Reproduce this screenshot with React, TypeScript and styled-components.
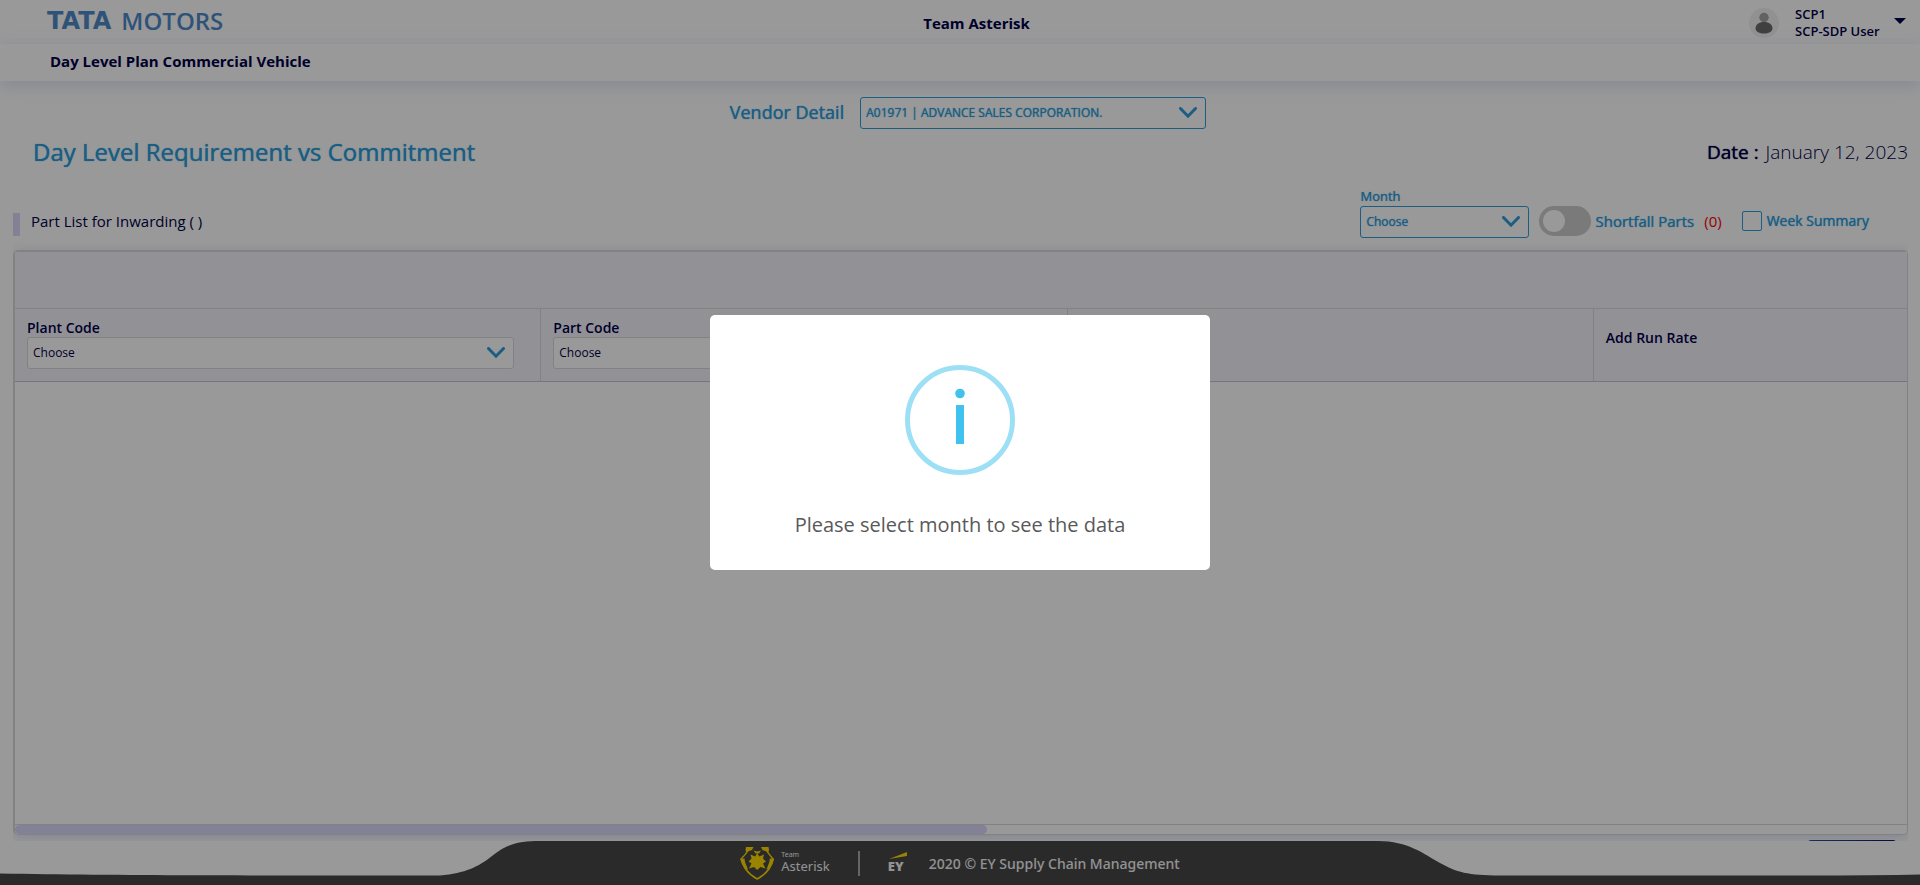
import React from "react";
import styled, { createGlobalStyle } from "styled-components";

const navy = "#000048";
const blue = "#2d9cdb";
const lavender = "#dad7fa";
const line = "#d9d9d9";

const GlobalStyle = createGlobalStyle`
  *, *::before, *::after { box-sizing: border-box; }
  body {
    margin: 0;
    background: #fff;
    color: ${navy};
    font-family: "Open Sans", "Noto Sans", sans-serif;
    font-size: 14px;
  }
  h1, h2, h3, p { margin: 0; }
  select, input, button { font-family: inherit; }
`;

const Page = styled.div`
  min-height: 100vh;
  display: flex;
  flex-direction: column;
  overflow: hidden;
`;

const TopBar = styled.header`
  height: 44px;
  padding: 2px 14px 0 47px;
  display: grid;
  grid-template-columns: 1fr auto 1fr;
  align-items: center;
`;

const Brand = styled.a`
  display: flex;
  align-items: center;
  gap: 10px;
  height: 40px;
  padding-bottom: 4px;
  color: #4f8ac9;
  line-height: 36px;
  text-decoration: none;
`;

const BrandHeavy = styled.span`
  font-family: "DejaVu Sans", sans-serif;
  font-size: 24px;
  font-weight: 700;
`;

const BrandLight = styled.span`
  font-size: 24px;
  font-weight: 600;
`;

const TeamName = styled.h2`
  font-size: 15px;
  line-height: 20px;
  font-weight: 700;
`;

const UserMenu = styled.button`
  justify-self: end;
  display: flex;
  align-items: center;
  padding: 0;
  border: 0;
  background: none;
  color: ${navy};
  text-align: left;
  font-size: 13px;
  line-height: 17px;
  font-weight: 600;
`;

const UserName = styled.span`
  width: 99px;
  margin-left: 16px;
`;

const TitleBar = styled.div`
  height: 37px;
  padding: 0 50px 4px;
  display: flex;
  align-items: center;
  background: #fff;
  box-shadow: 0 4px 16px rgba(160, 165, 225, 0.35);
`;

const PageTitle = styled.h1`
  font-size: 15px;
  line-height: 20px;
  font-weight: 700;
`;

const Main = styled.main`
  flex: 1;
  padding: 16px 12px 0;
  display: flex;
  flex-direction: column;
`;

const VendorRow = styled.div`
  display: flex;
  justify-content: center;
  align-items: center;
  gap: 16px;
  padding-left: 16px;
`;

const VendorLabel = styled.label`
  padding-bottom: 2px;
  color: ${blue};
  font-size: 18px;
  line-height: 24px;
  text-shadow: 0 0 1px ${blue};
`;

const SelectBox = styled.span<{ $width?: string }>`
  position: relative;
  display: block;
  width: ${(p) => p.$width ?? "100%"};
`;

const SelectField = styled.select<{ $accent?: boolean }>`
  appearance: none;
  display: block;
  width: 100%;
  height: 32px;
  padding: 0 36px 2px 5px;
  border: 1px solid ${(p) => (p.$accent ? blue : line)};
  border-radius: 3px;
  background: #fff;
  color: ${(p) => (p.$accent ? blue : navy)};
  font-size: 12px;
  text-shadow: ${(p) => (p.$accent ? `0 0 1px ${blue}` : "none")};
`;

const SelectArrow = styled.svg`
  position: absolute;
  right: 9px;
  top: 10px;
  pointer-events: none;
`;

const HeadingRow = styled.div`
  height: 47px;
  padding: 0 0 1px 21px;
  display: flex;
  justify-content: space-between;
  align-items: center;
`;

const Heading = styled.h2`
  color: ${blue};
  font-size: 24px;
  line-height: 32px;
  font-weight: 400;
  text-shadow: 0 0 1px ${blue};
`;

const DateText = styled.p`
  font-size: 19px;
  line-height: 24px;
  font-weight: 300;
`;

const DateLabel = styled.span`
  margin-right: 2px;
  font-weight: 400;
  text-shadow: 0 0 1px ${navy};
`;

const FilterRow = styled.div`
  padding: 10px 39px 12px 0;
  display: flex;
  justify-content: space-between;
  align-items: flex-end;
`;

const ListTitle = styled.h3`
  display: flex;
  gap: 11px;
  margin-bottom: 2px;
  font-size: 15px;
  line-height: 16px;
  font-weight: 400;

  &::before {
    content: "";
    width: 7px;
    height: 23px;
    margin-left: 1px;
    background: ${lavender};
  }
`;

const Filters = styled.div`
  display: flex;
  align-items: flex-end;
`;

const MonthLabel = styled.label`
  display: block;
  color: ${blue};
  font-size: 13px;
  line-height: 20px;
  text-shadow: 0 0 1px ${blue};
`;

const FilterLabel = styled.label<{ $small?: boolean }>`
  display: flex;
  align-items: center;
  height: 34px;
  color: ${blue};
  font-size: ${(p) => (p.$small ? 14 : 15)}px;
  line-height: 20px;
  text-shadow: 0 0 1px ${blue};
`;

const Switch = styled.input`
  appearance: none;
  width: 52px;
  height: 30px;
  margin: 0 4px 0 10px;
  padding: 4px;
  border-radius: 15px;
  background: #ccc;

  &::before {
    content: "";
    display: block;
    width: 22px;
    height: 22px;
    border-radius: 50%;
    background: #fff;
  }
`;

const Count = styled.span`
  margin-left: 10px;
  color: #f00;
  text-shadow: none;
`;

const CheckBox = styled.input`
  appearance: none;
  width: 20px;
  height: 20px;
  margin: 0 5px 0 20px;
  border: 1px solid ${blue};
  border-radius: 2px;
`;

const Panel = styled.section`
  flex: 1;
  margin-left: 1px;
  display: flex;
  flex-direction: column;
  border: 1px solid ${line};
  border-top-width: 2px;
  border-left-width: 2px;
  border-radius: 5px;
  box-shadow: 0 2px 12px rgba(160, 165, 225, 0.4);
  clip-path: inset(-20px 0);
`;

const TableScroll = styled.div`
  flex: 1;
  overflow-x: auto;
  scrollbar-width: none;
  border-bottom: 1px solid ${line};
`;

const Table = styled.table`
  width: 3684px;
  table-layout: fixed;
  border-collapse: separate;
  border-spacing: 0;
`;

const GroupCell = styled.th`
  height: 57px;
  padding: 0;
  background: #f3f2fb;
  border-bottom: 1px solid ${line};
`;

const HeadCell = styled.th<{ $plain?: boolean }>`
  height: 73px;
  padding: 0 26px ${(p) => (p.$plain ? 16 : 3)}px 12px;
  background: #f3f2fb;
  border-right: 1px solid ${line};
  border-bottom: 1px solid #c3c3cd;
  font-size: 14px;
  line-height: 19px;
  font-weight: 600;
  text-align: left;
`;

const HeadLabel = styled.label`
  display: block;
`;

const ScrollTrack = styled.div`
  height: 9px;
`;

const ScrollThumb = styled.div`
  width: 51.4%;
  height: 9px;
  border-radius: 5px;
  background: ${lavender};
`;

const Actions = styled.div`
  padding: 5px 12px 0;
  display: flex;
  justify-content: flex-end;
`;

const SubmitButton = styled.button`
  width: 88px;
  height: 45px;
  border: 0;
  border-radius: 3px;
  background: linear-gradient(90deg, #1f4596, #00005e);
`;

const Footer = styled.footer`
  position: fixed;
  left: 0;
  right: 0;
  bottom: 0;
  height: 44px;
  display: flex;
  justify-content: center;
  align-items: center;
  background: #fff;
  color: #f4f4f4;
`;

const FooterShape = styled.svg`
  position: absolute;
  inset: 0;
  width: 100%;
  height: 100%;
`;

const FooterContent = styled.div`
  position: relative;
  display: flex;
  align-items: center;
  padding-top: 1px;
  font-family: "Noto Sans", sans-serif;
`;

const TeamMark = styled.span`
  margin-left: 7px;
  padding-bottom: 3px;
  display: flex;
  flex-direction: column;
  font-size: 13px;
  line-height: 14px;
`;

const TeamMarkSmall = styled.small`
  font-size: 7px;
  line-height: 8px;
`;

const Divider = styled.span`
  width: 2px;
  height: 25px;
  margin: 0 28px;
  background: #aaa;
`;

const EyMark = styled.span`
  padding-bottom: 2px;
  display: flex;
  flex-direction: column;
  font-family: "Open Sans", sans-serif;
  font-size: 13px;
  line-height: 14px;
  font-weight: 800;
`;

const Copyright = styled.p`
  margin-left: 21px;
  font-size: 14px;
  line-height: 20px;
  font-weight: 500;
`;

const Backdrop = styled.div`
  position: fixed;
  inset: 0;
  display: flex;
  justify-content: center;
  align-items: center;
  background: rgba(0, 0, 0, 0.4);
`;

const Dialog = styled.div`
  width: 500px;
  padding: 50px 20px 31px;
  display: flex;
  flex-direction: column;
  align-items: center;
  border-radius: 5px;
  background: #fff;
`;

const DialogText = styled.p`
  margin-top: 35px;
  color: #595959;
  font-size: 20px;
  line-height: 29px;
`;

type SelectProps = {
  id: string;
  value: string;
  accent?: boolean;
  width?: string;
};

function Select({ id, value, accent, width }: SelectProps) {
  return (
    <SelectBox $width={width}>
      <SelectField id={id} $accent={accent}>
        <option>{value}</option>
      </SelectField>
      <SelectArrow width="18" height="12" viewBox="0 0 18 12" aria-hidden="true">
        <path d="M1.500 1.500 9 9.200l7.500-7.700" fill="none" stroke={blue} strokeWidth="3" strokeLinecap="round" />
      </SelectArrow>
    </SelectBox>
  );
}

export default function App() {
  return (
    <>
      <GlobalStyle />
      <Page>
        <TopBar>
          <Brand href="#">
            <BrandHeavy>TATA</BrandHeavy>
            <BrandLight>MOTORS</BrandLight>
          </Brand>
          <TeamName>Team Asterisk</TeamName>
          <UserMenu type="button">
            <svg width="30" height="30" viewBox="0 0 30 30" aria-hidden="true">
              <circle cx="15" cy="15" r="15" fill="#f2f2f2" />
              <circle cx="15" cy="9.500" r="4.700" fill="#a3a3a3" />
              <path d="M6.500 20.500c0-4 3.500-6.500 8.500-6.500s8.500 2.500 8.500 6.500c0 3-4 5-8.500 5s-8.500-2-8.500-5z" fill="#6b6b6b" />
            </svg>
            <UserName>
              SCP1
              <br />
              SCP-SDP User
            </UserName>
            <svg width="12" height="10" viewBox="0 0 12 10" aria-hidden="true">
              <path d="M0 0h12L6 6z" fill={navy} />
            </svg>
          </UserMenu>
        </TopBar>
        <TitleBar>
          <PageTitle>Day Level Plan Commercial Vehicle</PageTitle>
        </TitleBar>
        <Main>
          <VendorRow>
            <VendorLabel htmlFor="vendor">Vendor Detail</VendorLabel>
            <Select id="vendor" value="A01971 | ADVANCE SALES CORPORATION." accent width="346px" />
          </VendorRow>
          <HeadingRow>
            <Heading>Day Level Requirement vs Commitment</Heading>
            <DateText>
              <DateLabel>Date :</DateLabel> January 12, 2023
            </DateText>
          </HeadingRow>
          <FilterRow>
            <ListTitle>Part List for Inwarding ( )</ListTitle>
            <Filters>
              <div>
                <MonthLabel htmlFor="month">Month</MonthLabel>
                <Select id="month" value="Choose" accent width="169px" />
              </div>
              <FilterLabel>
                <Switch type="checkbox" role="switch" />
                Shortfall Parts <Count>(0)</Count>
              </FilterLabel>
              <FilterLabel $small>
                <CheckBox type="checkbox" />
                Week Summary
              </FilterLabel>
            </Filters>
          </FilterRow>
          <Panel>
            <TableScroll>
              <Table>
                <thead>
                  <tr>
                    <GroupCell colSpan={7} />
                  </tr>
                  <tr>
                    <HeadCell>
                      <HeadLabel htmlFor="plant">Plant Code</HeadLabel>
                      <Select id="plant" value="Choose" />
                    </HeadCell>
                    <HeadCell>
                      <HeadLabel htmlFor="part">Part Code</HeadLabel>
                      <Select id="part" value="Choose" />
                    </HeadCell>
                    <HeadCell $plain />
                    <HeadCell $plain>Add Run Rate</HeadCell>
                    <HeadCell $plain />
                    <HeadCell $plain />
                    <HeadCell $plain />
                  </tr>
                </thead>
              </Table>
            </TableScroll>
            <ScrollTrack>
              <ScrollThumb />
            </ScrollTrack>
          </Panel>
          <Actions>
            <SubmitButton type="button" aria-label="Submit" />
          </Actions>
        </Main>
        <Footer>
          <FooterShape viewBox="0 0 1920 44" preserveAspectRatio="none" aria-hidden="true">
            <path
              d="M0 32.500C120 34.500 250 34.500 440 34.500C466 32 478 26 492 15C506 4 516 0 540 0H1378C1408 0 1424 13 1440 22C1456 31 1468 34.500 1500 34.500H1800Q1880 34.500 1920 33.500V44H0Z"
              fill="#464646"
            />
          </FooterShape>
          <FooterContent>
            <svg width="34" height="33" viewBox="0 0 34 33" aria-hidden="true">
              <path d="M7.500 4C6 7 3.500 9.500 1 12C2 16 3.500 19 5.500 22C8.500 26 12.500 29.500 17.200 32C22 29.500 26 26 29 22C31 19 32.500 16 33.200 12C31 9.500 28.500 7 27 4" fill="none" stroke="#ffdb00" strokeWidth="1.500" />
              <path d="M0.500 12L4.500 11.500L5 15L8 22.500L5.500 22C3 19 1.500 16 0.500 12ZM33.800 12L29.800 11.500L29.300 15L26.500 22.500L29 22C31.500 19 33 16 33.800 12Z" fill="#ffdb00" />
              <path d="M6 0H13.500L12 3L8 4.500L6.500 6L5.500 3ZM28.500 0H21L22.500 3L26.500 4.500L28 6L29 3ZM13.500 3.500L17.200 4.500L21 3.500L19 6.500H15.500Z" fill="#ffdb00" />
              <path d="M17.200 6L19.300 9.500L24 7.500L23 11.500L26 14.500L23 16.500L25.500 21.500L20.500 20L17.200 23L14 20L9 21.500L11.500 16.500L8.500 14.500L11.500 11.500L10.500 7.500L15.200 9.500Z" fill="#ffdb00" />
            </svg>
            <TeamMark>
              <TeamMarkSmall>Team</TeamMarkSmall>
              Asterisk
            </TeamMark>
            <Divider />
            <EyMark>
              <svg width="20" height="7" viewBox="0 0 20 7" aria-hidden="true">
                <path d="M1 7 19 0v4z" fill="#ffdb00" />
              </svg>
              EY
            </EyMark>
            <Copyright>2020 © EY Supply Chain Management</Copyright>
          </FooterContent>
        </Footer>
      </Page>
      <Backdrop>
        <Dialog role="dialog" aria-modal="true" aria-labelledby="dialog-text">
          <svg width="110" height="110" viewBox="0 0 110 110" aria-hidden="true">
            <circle cx="55" cy="55" r="52.500" fill="none" stroke="#9de0f6" strokeWidth="5" />
            <circle cx="55" cy="28.500" r="4.800" fill="#3fc3ee" />
            <path d="M51 40h8v39h-8z" fill="#3fc3ee" />
          </svg>
          <DialogText id="dialog-text">Please select month to see the data</DialogText>
        </Dialog>
      </Backdrop>
    </>
  );
}
